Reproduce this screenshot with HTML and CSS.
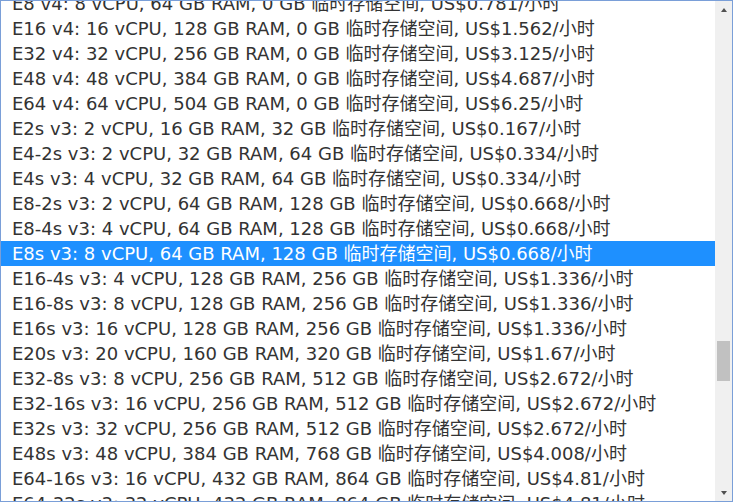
FILE: index.html
```html
<!DOCTYPE html>
<html lang="zh-CN">
<head>
<meta charset="utf-8">
<title>VM sizes</title>
<link rel="stylesheet" href="styles.css">
</head>
<body>
<div class="frame">
  <ul class="list">
    <li class="opt">E8 v4: 8 vCPU, 64 GB RAM, 0 GB 临时存储空间, US$0.781/小时</li>
    <li class="opt">E16 v4: 16 vCPU, 128 GB RAM, 0 GB 临时存储空间, US$1.562/小时</li>
    <li class="opt">E32 v4: 32 vCPU, 256 GB RAM, 0 GB 临时存储空间, US$3.125/小时</li>
    <li class="opt">E48 v4: 48 vCPU, 384 GB RAM, 0 GB 临时存储空间, US$4.687/小时</li>
    <li class="opt">E64 v4: 64 vCPU, 504 GB RAM, 0 GB 临时存储空间, US$6.25/小时</li>
    <li class="opt">E2s v3: 2 vCPU, 16 GB RAM, 32 GB 临时存储空间, US$0.167/小时</li>
    <li class="opt">E4-2s v3: 2 vCPU, 32 GB RAM, 64 GB 临时存储空间, US$0.334/小时</li>
    <li class="opt">E4s v3: 4 vCPU, 32 GB RAM, 64 GB 临时存储空间, US$0.334/小时</li>
    <li class="opt">E8-2s v3: 2 vCPU, 64 GB RAM, 128 GB 临时存储空间, US$0.668/小时</li>
    <li class="opt">E8-4s v3: 4 vCPU, 64 GB RAM, 128 GB 临时存储空间, US$0.668/小时</li>
    <li class="opt selected">E8s v3: 8 vCPU, 64 GB RAM, 128 GB 临时存储空间, US$0.668/小时</li>
    <li class="opt">E16-4s v3: 4 vCPU, 128 GB RAM, 256 GB 临时存储空间, US$1.336/小时</li>
    <li class="opt">E16-8s v3: 8 vCPU, 128 GB RAM, 256 GB 临时存储空间, US$1.336/小时</li>
    <li class="opt">E16s v3: 16 vCPU, 128 GB RAM, 256 GB 临时存储空间, US$1.336/小时</li>
    <li class="opt">E20s v3: 20 vCPU, 160 GB RAM, 320 GB 临时存储空间, US$1.67/小时</li>
    <li class="opt">E32-8s v3: 8 vCPU, 256 GB RAM, 512 GB 临时存储空间, US$2.672/小时</li>
    <li class="opt">E32-16s v3: 16 vCPU, 256 GB RAM, 512 GB 临时存储空间, US$2.672/小时</li>
    <li class="opt">E32s v3: 32 vCPU, 256 GB RAM, 512 GB 临时存储空间, US$2.672/小时</li>
    <li class="opt">E48s v3: 48 vCPU, 384 GB RAM, 768 GB 临时存储空间, US$4.008/小时</li>
    <li class="opt">E64-16s v3: 16 vCPU, 432 GB RAM, 864 GB 临时存储空间, US$4.81/小时</li>
    <li class="opt">E64-32s v3: 32 vCPU, 432 GB RAM, 864 GB 临时存储空间, US$4.81/小时</li>
  </ul>
  <div class="scrollbar">
    <div class="arrow-btn"><span class="tri tri-up"></span></div>
    <div class="track"><div class="thumb"></div></div>
    <div class="arrow-btn"><span class="tri tri-down"></span></div>
  </div>
</div>
</body>
</html>
```
FILE: styles.css
```css
html, body {
  margin: 0;
  padding: 0;
  background: #ffffff;
}
.frame {
  box-sizing: border-box;
  width: 733px;
  height: 502px;
  border: 1px solid #7a9fd8;
  display: flex;
  overflow: hidden;
  background: #ffffff;
}
.list {
  flex: 1;
  margin: -10px 0 0 0;
  padding: 0;
  list-style: none;
  overflow: hidden;
  font-family: "DejaVu Sans", "Noto Sans CJK SC", sans-serif;
  font-size: 18px;
  color: #333333;
}
.opt {
  height: 25px;
  line-height: 25px;
  padding-left: 11px;
  white-space: nowrap;
}
.selected {
  background: #1e90ff;
  color: #ffffff;
}
.scrollbar {
  width: 17px;
  flex: none;
  background: #f0f0f0;
  display: flex;
  flex-direction: column;
}
.arrow-btn {
  height: 17px;
  flex: none;
  display: flex;
  align-items: center;
  justify-content: center;
}
.track {
  flex: 1;
  padding: 0 2px;
}
.thumb {
  margin-top: 323px;
  height: 40px;
  background: #c1c1c1;
}
.tri {
  width: 0;
  height: 0;
  border-left: 3.5px solid transparent;
  border-right: 3.5px solid transparent;
}
.tri-up {
  border-bottom: 4px solid #505050;
}
.tri-down {
  border-top: 4px solid #505050;
}
```
